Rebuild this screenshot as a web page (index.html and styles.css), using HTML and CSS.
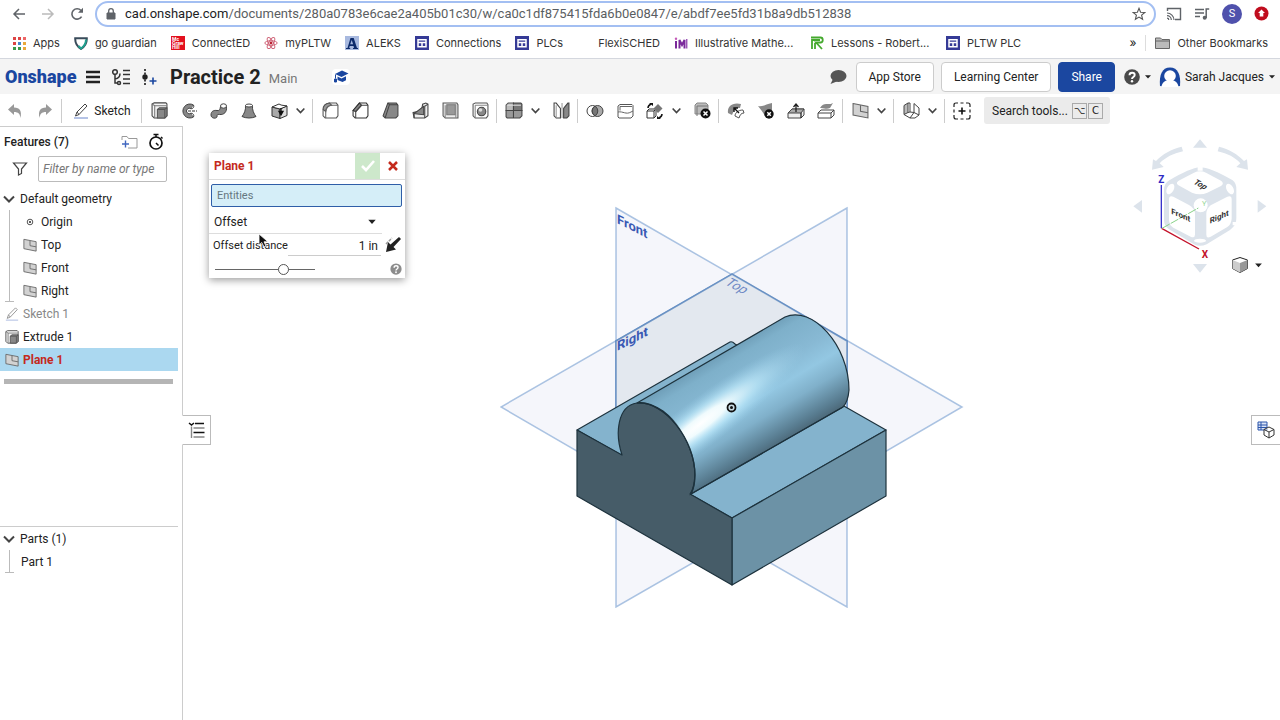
FILE: index.html
```html
<!DOCTYPE html>
<html lang="en">
<head>
<meta charset="utf-8">
<title>Practice 2 | Part Studio</title>
<link rel="stylesheet" href="styles.css">
</head>
<body>
<svg class="defs" aria-hidden="true">
  <symbol id="chevron" viewBox="0 0 10 10"><path d="M1.5 3.2 5 6.8 8.5 3.2" fill="none" stroke="#444" stroke-width="1.5"/></symbol>
  <symbol id="caret" viewBox="0 0 8 8"><path d="M1 2.2h6L4 5.6z" fill="#222"/></symbol>
  <symbol id="plane" viewBox="0 0 16 16"><path d="M1 1.5 15 4.2V15L1 12.2z" fill="#d2d2d2" stroke="#666"/><path d="M8 3v5.800l7 1.300" fill="none" stroke="#666"/></symbol>
  <symbol id="extrude" viewBox="0 0 16 16"><path d="M1 1.800 3 .800h11l1 1V13l-2 2H3l-2-2z" fill="#f6f6f6" stroke="#444"/><path d="M3.500 3.500h11M3.500 3.500V14.500M1 1.800l2.500 1.700" fill="none" stroke="#777"/><path d="M6 7l2-1.500h7V13l-2 2H6z" fill="#888" stroke="#555"/><path d="M6 7h7v8M13 7l2-1.500" fill="none" stroke="#555"/></symbol>
  <symbol id="pencil" viewBox="0 0 16 16"><path d="M2.500 13 4 9 12 1l2 2-8 8.500z" fill="#fff" stroke="#444"/><path d="M4 9l2 2.500" stroke="#444"/><path d="M1 15h14" stroke="#6a86cc"/></symbol>
  <symbol id="site" viewBox="0 0 14 14"><path d="M0 0h14v14H0z" fill="#353a96"/><path d="M3 3.800h8v7H3zM3 6.600h8M7 6.600v4" fill="none" stroke="#fff" stroke-width="1.500"/></symbol>
</svg>

<div class="browser">
  <div class="address-row">
    <button class="nav" aria-label="Back"><svg width="14" height="14" viewBox="0 0 14 14"><path d="M13 7H2M7 2 2 7l5 5" fill="none" stroke="#5f6368" stroke-width="1.500"/></svg></button>
    <button class="nav" aria-label="Forward"><svg width="14" height="14" viewBox="0 0 14 14"><path d="M1 7h11M7 2l5 5-5 5" fill="none" stroke="#bbb" stroke-width="1.500"/></svg></button>
    <button class="nav" aria-label="Reload"><svg width="14" height="14" viewBox="0 0 14 14"><path d="M11.600 9.600A5.200 5.200 0 1 1 11 3.500" fill="none" stroke="#5f6368" stroke-width="1.600"/><path d="M13 .800v5H8z" fill="#5f6368"/></svg></button>
    <div class="omnibox">
      <svg width="10" height="12" viewBox="0 0 10 12"><path d="M1 5h8v6H1z" fill="#5f6368" stroke="#5f6368"/><path d="M2.700 5V3a2.300 2.300 0 0 1 4.600 0v2" fill="none" stroke="#5f6368" stroke-width="1.300"/></svg>
      <span class="url"><b>cad.onshape.com</b>/documents/280a0783e6cae2a405b01c30/w/ca0c1df875415fda6b0e0847/e/abdf7ee5fd31b8a9db512838</span>
      <svg width="14" height="14" viewBox="0 0 14 14"><path d="m7 1.300 1.600 3.900 4.200.300-3.200 2.700 1 4.100L7 10.100l-3.600 2.200 1-4.100L1.200 5.500l4.200-.300z" fill="none" stroke="#555" stroke-width="1.100"/></svg>
    </div>
    <div class="extensions">
      <svg width="16" height="14" viewBox="0 0 16 14"><path d="M1.500 4V1.500h13v11H9" fill="none" stroke="#5f6368" stroke-width="1.400"/><path d="M1 6a7 7 0 0 1 7 7M1 8.700A4.300 4.300 0 0 1 5.300 13M1 11.200A1.800 1.800 0 0 1 2.800 13" fill="none" stroke="#5f6368" stroke-width="1.200"/></svg>
      <svg width="16" height="14" viewBox="0 0 16 14"><path d="M1 2.500h9M1 6h9M1 9.500h5M12.200 11V2h3" fill="none" stroke="#5f6368" stroke-width="1.500"/><circle cx="10.700" cy="10.800" r="2" fill="#5f6368"/></svg>
      <span class="profile">S</span>
      <svg width="15" height="15" viewBox="0 0 15 15"><circle cx="7.500" cy="7.500" r="7" fill="#c00d1e"/><path d="M7.500 3.500 11 7H9.300v3.500H5.700V7H4z" fill="#fff"/></svg>
    </div>
  </div>
  <nav class="bookmarks">
    <a href="#"><svg width="14" height="14" viewBox="0 0 14 14"><path d="M1 1h3v3H1zM1 6h3v3H1z" fill="#d44"/><path d="M6 1h3v3H6z" fill="#d44"/><path d="M11 1h3v3h-3z" fill="#e66"/><path d="M6 6h3v3H6z" fill="#48c"/><path d="M11 6h3v3h-3z" fill="#e9a83a"/><path d="M1 11h3v3H1z" fill="#3a9a4a"/><path d="M6 11h3v3H6z" fill="#3a9a4a"/><path d="M11 11h3v3h-3z" fill="#e9a83a"/></svg>Apps</a>
    <a href="#"><svg width="14" height="14" viewBox="0 0 14 14"><path d="M1.200 2.200h11.600C13 7 11 10.500 7 13 3 10.500 1 7 1.200 2.200z" fill="none" stroke="#394b5a" stroke-width="2"/><path d="M12 3.500C12 7.500 10.500 10 7 12.500L4.500 10" fill="none" stroke="#20a08e" stroke-width="2"/></svg>go guardian</a>
    <a href="#"><svg class="mcgraw" width="14" height="14" viewBox="0 0 14 14"><path d="M0 0h14v14H0z" fill="#e3101e"/><text x="1" y="5">Mc</text><text x="1" y="9">Graw</text><text x="1" y="13">Hill</text></svg>ConnectED</a>
    <a href="#"><svg width="14" height="14" viewBox="0 0 14 14"><g fill="none" stroke="#cf6478"><ellipse cx="7" cy="7" rx="6.200" ry="2.300"/><ellipse cx="7" cy="7" rx="6.200" ry="2.300" transform="rotate(60 7 7)"/><ellipse cx="7" cy="7" rx="6.200" ry="2.300" transform="rotate(120 7 7)"/></g><circle cx="7" cy="7" r="1.400" fill="#b23"/></svg>myPLTW</a>
    <a href="#"><svg width="14" height="14" viewBox="0 0 14 14"><path d="M0 0h14v14H0z" fill="#a8b9df"/><path d="M1 12h1.500L5.500 2h3.200L12 12h1v1H8v-1h1L8.500 10H4.700L4.200 12h1v1H1zM5.200 8.200h2.900L6.700 4z" fill="#0d2b6b" fill-rule="evenodd"/></svg>ALEKS</a>
    <a href="#"><svg width="14" height="14"><use href="#site"/></svg>Connections</a>
    <a href="#"><svg width="14" height="14"><use href="#site"/></svg>PLCs</a>
    <a href="#"><svg width="14" height="14"></svg>FlexiSCHED</a>
    <a class="long" href="#"><svg width="14" height="14" viewBox="0 0 14 14"><path d="M2 5v7.500M5.500 12.500V4L8 9l2.500-5v8.500" fill="none" stroke="#7b2a9b" stroke-width="2"/><circle cx="2" cy="2.800" r="1.200" fill="#c45ab8"/><path d="M12.700 3v9.500" stroke="#9c55b5" stroke-width="1.500"/></svg>Illustrative Mathe...</a>
    <a class="long" href="#"><svg width="14" height="14" viewBox="0 0 14 14"><path d="M2 13V4h3M1 1.500h9.500c3 0 3 5 0 5H6l6 6.500M5 4h5M5 13V7" fill="none" stroke="#45a92e" stroke-width="1.800"/></svg>Lessons - Robert...</a>
    <a href="#"><svg width="14" height="14"><use href="#site"/></svg>PLTW PLC</a>
    <span class="more">»</span>
    <a class="other" href="#"><svg width="15" height="12" viewBox="0 0 15 12"><path d="M.500 1h5l1.500 1.500h7.500v9H.500z" fill="#bbb" stroke="#666"/><path d="M.500 4h14" stroke="#666"/></svg>Other Bookmarks</a>
  </nav>
</div>

<header class="doc-bar">
  <span class="logo">Onshape</span>
  <button class="plain" aria-label="Menu"><svg width="16" height="16" viewBox="0 0 16 16"><path d="M1 3h14M1 8h14M1 13h14" stroke="#222" stroke-width="2.400"/></svg></button>
  <button class="plain" aria-label="Versions"><svg width="20" height="18" viewBox="0 0 20 18"><g fill="none" stroke="#333" stroke-width="1.500"><circle cx="4" cy="4" r="2.300"/><path d="M4 6.500v8.500h2.500M4 11C8 10.500 9 8 9 5.500"/><circle cx="8" cy="15" r="1.500"/><path d="M12 2.500h7M12 6.500h7M12 11h7M12 15.500h7"/></g></svg></button>
  <button class="plain" aria-label="Create version"><svg width="16" height="18" viewBox="0 0 16 18"><path d="M4 1v16" stroke="#333" stroke-width="1.800" stroke-dasharray="2 1.500"/><circle cx="4" cy="9" r="2.700" fill="#222"/><path d="M12 9.500v7M8.500 13h7" stroke="#1b47a0" stroke-width="1.600"/></svg></button>
  <h1>Practice 2</h1>
  <span class="workspace">Main</span>
  <span class="edu"><svg width="16" height="14" viewBox="0 0 16 14"><path d="M9 .500 15.500 3.500 8.500 7 2 4z" fill="#1b47a0"/><path d="M4.500 6.500 8.500 8.500l4.500-2.200v4L9.500 12 4.500 10z" fill="#1b47a0"/><path d="M2.500 4.500v4M1.500 9h2v3h-2z" fill="#1b47a0" stroke="#1b47a0"/></svg></span>
  <div class="account">
    <svg width="18" height="16" viewBox="0 0 18 16"><ellipse cx="9.500" cy="7" rx="8" ry="6" fill="#555"/><path d="M4 10l-2.500 5L9 12z" fill="#555"/></svg>
    <button class="btn">App Store</button>
    <button class="btn">Learning Center</button>
    <button class="btn share">Share</button>
    <button class="plain help" aria-label="Help"><svg width="16" height="16" viewBox="0 0 16 16"><circle cx="8" cy="8" r="7.800" fill="#4a4a4a"/><path d="M5.500 6.200c0-3.400 5.200-3.200 5.200-.200C10.700 8 8 8 8 10" fill="none" stroke="#fff" stroke-width="1.900"/><circle cx="8" cy="12.300" r="1.200" fill="#fff"/></svg><svg width="8" height="8"><use href="#caret"/></svg></button>
    <button class="plain user"><svg width="22" height="20" viewBox="0 0 22 20"><path d="M1 19C0 8 3 .500 11 .500S22 8 21 19l-4 .500H5z" fill="#1b47a0"/><circle cx="11" cy="9" r="5.800" fill="#fff"/><path d="M2.500 20c.500-5 4-6 6-7h5c2 1 5.500 2 6 7z" fill="#fff"/></svg>Sarah Jacques<svg width="8" height="8"><use href="#caret"/></svg></button>
  </div>
</header>

<div class="toolbar">
  <button aria-label="Undo"><svg width="16" height="16" viewBox="0 0 16 16"><path d="M1 6.500 7 1v3.500c6 0 8 4 6.500 10.500C13 11 11.500 9 7 9v3z" fill="#999"/></svg></button>
  <button aria-label="Redo"><svg width="16" height="16" viewBox="0 0 16 16"><path d="M15 6.500 9 1v3.500C3 4.500 1 8.500 2.500 15 3 11 4.500 9 9 9v3z" fill="#999"/></svg></button>
  <i></i>
  <button class="sketch"><svg width="16" height="16"><use href="#pencil"/></svg>Sketch</button>
  <i></i>
  <button aria-label="Extrude"><svg width="17" height="17"><use href="#extrude"/></svg></button>
  <button aria-label="Revolve"><svg width="16" height="16" viewBox="0 0 16 16"><path d="M12.500 2A7 7 0 1 0 12.500 14L10 10.200a2.800 2.800 0 1 1 0-4.400z" fill="#888" stroke="#444"/><path d="M10 5.800a2.600 2.600 0 0 0 2.500-3.800M10 10.200a2.600 2.600 0 0 1 2.500 3.800" fill="#eee" stroke="#444"/><path d="M7 8h9" stroke="#333" stroke-dasharray="3 1"/></svg></button>
  <button aria-label="Sweep"><svg width="18" height="16" viewBox="0 0 18 16"><path d="M1 12c0-4 3-5 6-4.500C10 8 10 6 10.500 3.500l6 .500C17 9 14 12 9.500 11.500 7 11 7 12 7 14c-1 2-6 1.500-6-2z" fill="#888" stroke="#444"/><ellipse cx="13.500" cy="3" rx="3" ry="2.200" fill="#fff" stroke="#444"/></svg></button>
  <button aria-label="Loft"><svg width="16" height="16" viewBox="0 0 16 16"><path d="M4.500 2.500C5 7 3 11 1 13.500c4 2 10 2 14 0C13 11 11 7 11.500 2.500z" fill="#888" stroke="#444"/><ellipse cx="8" cy="2.500" rx="3.500" ry="1.500" fill="#fff" stroke="#444"/></svg></button>
  <button aria-label="Thicken"><svg width="17" height="16" viewBox="0 0 17 16"><path d="M1 4v9l8 2.500V6z" fill="#aaa" stroke="#333"/><path d="M9 6v9.500l7-3V3z" fill="#ddd" stroke="#333"/><path d="M1 4l7-3c3 2 5 1 8 2L9 6z" fill="#fff" stroke="#333"/><path d="M10 5v5M8 8.500l2 3.500 2-3.500z" stroke="#111" stroke-width="1.300"/></svg></button>
  <button class="drop" aria-label="More create tools"><svg width="11" height="11"><use href="#chevron"/></svg></button>
  <i></i>
  <button aria-label="Fillet"><svg width="17" height="17" viewBox="0 0 16 16"><path d="M1 8q0-6 6-7h6.500L15 3v10l-1.500 2H3l-2-2z" fill="#fff" stroke="#555"/><path d="M1 7q0-5 6-6l2 2Q4 3.500 3.500 9z" fill="#999" stroke="#555"/><path d="M3.500 15V9Q4 3.500 9 3h6" fill="none" stroke="#666"/></svg></button>
  <button aria-label="Chamfer"><svg width="17" height="17" viewBox="0 0 16 16"><path d="M1 8 7 1h6.500L15 3v10l-1.500 2H3l-2-2z" fill="#fff" stroke="#333"/><path d="M1 8 7 1l2 2-5.500 6z" fill="#888" stroke="#333"/><path d="M3.500 15V9L9 3h6" fill="none" stroke="#444"/></svg></button>
  <button aria-label="Draft"><svg width="17" height="17" viewBox="0 0 16 16"><path d="M1 13 5.500 1h8l1.500 2v10l-2 2H3z" fill="#888" stroke="#444"/><path d="M3 15 7 2.500h8M5.500 1 7 2.500" fill="none" stroke="#444"/></svg></button>
  <button aria-label="Rib"><svg width="17" height="17" viewBox="0 0 16 16"><path d="M1 10l8-2 1-6 3-1 2 1v11l-3 2H2z" fill="#eee" stroke="#444"/><path d="M2 11 11 4v8z" fill="#888" stroke="#444"/><path d="M2 15v-4M12 15V4l3-2" fill="none" stroke="#444"/></svg></button>
  <button aria-label="Shell"><svg width="17" height="17" viewBox="0 0 16 16"><path d="M1 1h13l1 1.500V15H3l-2-2z" fill="#eee" stroke="#555"/><path d="M4.500 2.500h8V12h-8z" fill="#999" stroke="#777"/><path d="M3 3v12M13 2v13" stroke="#888"/></svg></button>
  <button aria-label="Hole"><svg width="17" height="17" viewBox="0 0 16 16"><path d="M1 2 3 1h11l1 1.500V13l-1.500 2H3l-2-2z" fill="#fff" stroke="#555"/><path d="M3 3h12M3 3v12" stroke="#888"/><circle cx="9" cy="9" r="4" fill="#888" stroke="#444"/><circle cx="8" cy="7.500" r="1.700" fill="#ddd"/></svg></button>
  <i></i>
  <button aria-label="Pattern"><svg width="18" height="17" viewBox="0 0 17 16"><path d="M1 3l2-2h5v7H1z" fill="#bbb" stroke="#555"/><path d="M1 8h7v7H2l-1-1zM8 8h8v5l-2 2H8z" fill="#999" stroke="#444"/><path d="M8 1h7l1 1v6H8z" fill="#777" stroke="#444"/><path d="M2 3h13" stroke="#ddd"/></svg></button>
  <button class="drop" aria-label="More patterns"><svg width="11" height="11"><use href="#chevron"/></svg></button>
  <button aria-label="Mirror"><svg width="17" height="17" viewBox="0 0 16 16"><path d="M1 1h2l4 5v9H3l-2-2z" fill="#fff" stroke="#444"/><path d="M10 6l4-5h1v12l-2 2h-3z" fill="#888" stroke="#444"/><path d="M3 3v12M8.500 1v14" stroke="#999"/></svg></button>
  <i></i>
  <button aria-label="Boolean"><svg width="18" height="16" viewBox="0 0 18 16"><circle cx="6.500" cy="8" r="5.500" fill="#fff" stroke="#444"/><circle cx="11.500" cy="8" r="5.500" fill="#aaa" stroke="#444"/><path d="M9 3.200a5.500 5.500 0 0 1 0 9.600 5.500 5.500 0 0 1 0-9.600z" fill="#777" stroke="#444"/></svg></button>
  <button aria-label="Split"><svg width="17" height="16" viewBox="0 0 17 16"><path d="M1 3l2-1.500h12l1 1V13l-2 2H2l-1-1z" fill="#fff" stroke="#555"/><path d="M3 3.500h12M1 9c5-1 8 3 13 0l2-1M3 3.500v4" fill="none" stroke="#666"/></svg></button>
  <button aria-label="Transform"><svg width="18" height="18" viewBox="0 0 18 18"><path d="M1 9l2-2h7v7l-2 2H1z" fill="#fff" stroke="#333"/><path d="M1 9h7v7M8 9l2-2" fill="none" stroke="#333"/><path d="M12 2l4.500 4.500L12 11 7.500 6.500z" fill="#777"/><path d="M2 6c0-2 1-3 3-4M16 12c0 2-1 3-3 4" fill="none" stroke="#111" stroke-width="1.500"/><path d="M3 1h4v3zM15 17h-4v-3z" fill="#111"/></svg></button>
  <button class="drop" aria-label="More transforms"><svg width="11" height="11"><use href="#chevron"/></svg></button>
  <button aria-label="Delete part"><svg width="17" height="17" viewBox="0 0 17 17"><path d="M1 3l2-2h9l2 2v9H1z" fill="#bbb" stroke="#888"/><path d="M3 14V4h11" fill="none" stroke="#777"/><circle cx="11.500" cy="11.500" r="5" fill="#111"/><path d="M9.500 9.500l4 4M13.500 9.500l-4 4" stroke="#fff" stroke-width="1.500"/></svg></button>
  <i></i>
  <button aria-label="Modify fillet"><svg width="18" height="17" viewBox="0 0 18 17"><path d="M1 11C0 4 6 0 14 2l-1 4H8L5 13z" fill="#888"/><path d="M8 14c0-3 3-6 8-6l1 3c-3 0-4 2-5 5z" fill="#fff" stroke="#555"/><path d="M12 11 7.500 6.500M7 10V6h4" fill="none" stroke="#111" stroke-width="1.400"/></svg></button>
  <button aria-label="Delete face"><svg width="18" height="17" viewBox="0 0 18 17"><path d="M1 4c5 1 8-2 14-3v9l-7 4C6 10 4 8 1 4z" fill="#888"/><circle cx="12" cy="12" r="4.700" fill="#111"/><path d="M10.300 10.300l3.500 3.500M13.800 10.300l-3.500 3.500" stroke="#fff" stroke-width="1.500"/></svg></button>
  <button aria-label="Move face"><svg width="18" height="17" viewBox="0 0 18 17"><path d="M1 11l4-4h12v6l-3 3H1z" fill="#eee" stroke="#444"/><path d="M1 11l4-4h12l-3 4z" fill="#aaa" stroke="#444"/><path d="M14 11v5M9 10V3M6.500 5 9 2l2.500 3" fill="none" stroke="#222" stroke-width="1.300"/></svg></button>
  <button aria-label="Replace face"><svg width="18" height="17" viewBox="0 0 18 17"><path d="M3 6c4-7 8-2 13-5l-3 5c-4 2-6-.500-10 0z" fill="#888"/><path d="M1 11l3-3h13v5l-3 3H1z" fill="#fff" stroke="#444"/><path d="M1 11h13v5M14 11l3-3" fill="none" stroke="#444"/></svg></button>
  <i></i>
  <button aria-label="Plane"><svg width="17" height="17"><use href="#plane"/></svg></button>
  <button class="drop" aria-label="More planes"><svg width="11" height="11"><use href="#chevron"/></svg></button>
  <i></i>
  <button aria-label="Frame"><svg width="17" height="17" viewBox="0 0 17 17"><path d="M1 3.500 5 1v9.500l-4 2z" fill="#bbb" stroke="#444"/><path d="M1 12.500 7 16h5l4-3V6l-5-4.500v9L7 16M5 1h2v9l-2 .500M7 10l4 .500 5 2.500" fill="none" stroke="#444"/></svg></button>
  <button class="drop" aria-label="More frames"><svg width="11" height="11"><use href="#chevron"/></svg></button>
  <i></i>
  <button aria-label="Add custom features"><svg width="18" height="18" viewBox="0 0 18 18"><path d="M1 5V3q0-2 2-2h2M13 1h2q2 0 2 2v2M17 13v2q0 2-2 2h-2M5 17H3q-2 0-2-2v-2M7.500 1h3M7.500 17h3M1 7.500v3M17 7.500v3" fill="none" stroke="#222" stroke-width="1.200"/><path d="M9 5.500v7M5.500 9h7" stroke="#111" stroke-width="1.600"/></svg></button>
  <button class="search">Search tools...<kbd>⌥</kbd><kbd>C</kbd></button>
</div>

<main class="workspace-area">
  <aside class="sidebar">
    <section class="features">
      <div class="panel-head">
        <h2>Features (7)</h2>
        <svg width="17" height="14" viewBox="0 0 17 14"><path d="M1 5V1.500h5l1.500 2H16v9.500H7" fill="none" stroke="#999"/><path d="M4.500 5.500v7M1 9h7" stroke="#4067c0" stroke-width="1.400"/></svg>
        <svg width="16" height="18" viewBox="0 0 16 18"><circle cx="8" cy="10" r="6" fill="none" stroke="#111" stroke-width="1.700"/><path d="M5.500 1.500h5M8 1.500V4M13 4l1.500 1.500M8 10l2.500 2.500" fill="none" stroke="#111" stroke-width="1.500"/></svg>
      </div>
      <div class="filter">
        <svg width="16" height="16" viewBox="0 0 16 16"><path d="M1.500 2h13L9.500 8v4.500L6.500 14V8z" fill="none" stroke="#444" stroke-width="1.200"/></svg>
        <input type="text" aria-label="Filter features" placeholder="Filter by name or type">
      </div>
      <div class="row group"><svg width="14" height="14" viewBox="0 0 14 14"><path d="M2 4.500 7 9.500l5-5" fill="none" stroke="#444" stroke-width="2"/></svg>Default geometry</div>
      <ul class="children geometry">
        <li class="row"><svg width="14" height="14" viewBox="0 0 14 14"><circle cx="7" cy="7" r="2.800" fill="none" stroke="#555"/><circle cx="7" cy="7" r="1.100" fill="#333"/></svg>Origin</li>
        <li class="row"><svg width="14" height="14"><use href="#plane"/></svg>Top</li>
        <li class="row"><svg width="14" height="14"><use href="#plane"/></svg>Front</li>
        <li class="row"><svg width="14" height="14"><use href="#plane"/></svg>Right</li>
      </ul>
      <div class="row muted"><svg width="14" height="14"><use href="#pencil"/></svg>Sketch 1</div>
      <div class="row"><svg width="14" height="14"><use href="#extrude"/></svg>Extrude 1</div>
      <div class="row selected"><svg width="14" height="14"><use href="#plane"/></svg>Plane 1</div>
      <div class="rollback"></div>
    </section>
    <section class="parts">
      <div class="row group"><svg width="14" height="14" viewBox="0 0 14 14"><path d="M2 4.500 7 9.500l5-5" fill="none" stroke="#444" stroke-width="2"/></svg>Parts (1)</div>
      <ul class="children"><li class="row">Part 1</li></ul>
    </section>
  </aside>

  <section class="viewport">
    <svg class="model" width="464" height="402" viewBox="500 206 464 402" role="img" aria-label="Part 1 in isometric view">
      <defs>
        <linearGradient id="barrel" gradientUnits="userSpaceOnUse" x1="710" y1="357" x2="770" y2="457">
          <stop offset="0" stop-color="#6c9bb5"/><stop offset=".12" stop-color="#7eb0ca"/><stop offset=".35" stop-color="#88b9d4"/><stop offset=".52" stop-color="#93c7e2"/><stop offset=".68" stop-color="#80b0ca"/><stop offset=".88" stop-color="#587c90"/><stop offset="1" stop-color="#445b69"/>
        </linearGradient>
        <radialGradient id="shine" gradientUnits="userSpaceOnUse" cx="0" cy="0" r="1" gradientTransform="translate(700 424) rotate(-37) scale(130 24)">
          <stop offset="0" stop-color="#fff"/><stop offset=".25" stop-color="#f5feff" stop-opacity=".95"/><stop offset=".55" stop-color="#c5efff" stop-opacity=".6"/><stop offset="1" stop-color="#9bd1ec" stop-opacity="0"/>
        </radialGradient>
        <clipPath id="barrel-shape"><path d="M637 403 785 317C812 305 849 345 849 390Q848 402 843 407L691 494C701 470 690 432 663 411Q647 401 637 403z"/></clipPath>
      </defs>
      <g fill="#6b83c0" fill-opacity=".07" stroke="#5b8cc8" stroke-opacity=".5" stroke-width="1.500">
        <path d="M616 208 847 341V607L616 474z"/>
        <path d="M847 208 616 341V607l231-133z"/>
        <path d="M732 274 962 407 732 541 501 407z"/>
      </g>
      <path d="M616 341 732 274 847 341v133H616z" fill="#e4e9ed" fill-opacity=".8"/>
      <path d="M616 440V341l116-67 115 67v70" fill="none" stroke="#5583bb" stroke-opacity=".75" stroke-width="1.500"/>
      <g class="plane-label">
        <text transform="translate(617 223) skewY(27)">Front</text>
        <text transform="translate(617 351) skewY(-27)">Right</text>
        <text class="faint" transform="translate(724 284) rotate(28) skewX(-22)">Top</text>
      </g>
      <g stroke="#1d323d" stroke-width="1.200" stroke-linejoin="round">
        <path d="M577 430 730 342Q732 341 735 344L886 430 732 518z" fill="#84b3cd"/>
        <path d="M732 518 886 430v66L732 585z" fill="#6c92a6"/>
        <path d="M577 430 622 455C615 434 617 406 637 403 665 401 695 440 695 475Q695 487 690 494L732 518v67L577 496z" fill="#465c68"/>
        <path d="M637 403 785 317C812 305 849 345 849 390Q848 402 843 407L691 494C701 470 690 432 663 411Q647 401 637 403z" fill="url(#barrel)"/>
      </g>
      <path clip-path="url(#barrel-shape)" d="M600 300h260v210H600z" fill="url(#shine)"/>
      <path d="M637 403C665 401 695 440 695 475Q695 487 691 494L843 407" fill="none" stroke="#1d323d" stroke-width="1.200"/>
      <circle cx="731.500" cy="407.500" r="4" fill="#c9dbe3" stroke="#111" stroke-width="1.800"/><circle cx="731.500" cy="407.500" r="1.500" fill="#111"/>
    </svg>

    <form class="dialog">
      <div class="dialog-head">
        <h2>Plane 1</h2>
        <button type="button" class="accept" aria-label="Accept"><svg width="16" height="14" viewBox="0 0 16 14"><path d="M2 7l4 4 8-9" fill="none" stroke="#fff" stroke-width="2.600"/></svg></button>
        <button type="button" class="cancel" aria-label="Cancel"><svg width="12" height="12" viewBox="0 0 12 12"><path d="M2 2l8 8M10 2l-8 8" stroke="#c42a1c" stroke-width="2.500"/></svg></button>
      </div>
      <input class="entities" type="text" aria-label="Entities" placeholder="Entities">
      <div class="type">
        <select aria-label="Plane type"><option>Offset</option></select>
        <svg width="10" height="10"><use href="#caret"/></svg>
      </div>
      <div class="distance">
        <label for="dist">Offset distance</label>
        <input id="dist" type="text" value="1 in">
        <button type="button" aria-label="Opposite direction"><svg width="18" height="18" viewBox="0 0 18 18"><path d="M2 16 4 6l2.500 2.500L15 1l2 2-7.500 8L12 13.500z" fill="#222"/><path d="M2 8 8 2" stroke="#999" stroke-width="1.500" stroke-dasharray="3 1"/></svg></button>
      </div>
      <div class="slide">
        <input type="range" aria-label="Preview opacity" min="0" max="100" value="71">
        <svg width="12" height="12" viewBox="0 0 16 16"><circle cx="8" cy="8" r="7.500" fill="#8c8c8c"/><path d="M5.500 6.200c0-3.400 5.200-3.200 5.200-.200C10.700 8 8 8 8 10" fill="none" stroke="#fff" stroke-width="1.900"/><circle cx="8" cy="12.300" r="1.200" fill="#fff"/></svg>
      </div>
    </form>
    <svg class="pointer" width="11" height="15" viewBox="0 0 11 15"><path d="M1 1v11l2.800-2.500L6 14l2-1-2-4.200h4z" fill="#111" stroke="#fff" stroke-width=".8"/></svg>

    <button class="tab left" aria-label="Feature list"><svg width="18" height="18" viewBox="0 0 18 18"><path d="M1 2l2.500 2L6 2" fill="none" stroke="#111" stroke-width="1.500"/><path d="M7 2.500h9M5.500 11.500h11" stroke="#111" stroke-width="1.400"/><path d="M5.500 7h11M5.500 16h11M3.500 5.500V17" stroke="#888" stroke-width="1.400"/></svg></button>
    <button class="tab right" aria-label="Configurations"><svg width="18" height="18" viewBox="0 0 18 18"><path d="M1 1h9v8H1zM1 4h9M1 6.500h9M4 1v8" fill="#dbe4f7" stroke="#2a55ab"/><path d="M12 6l5 2.500V14l-5 3-5-3V8.500zM7 8.500l5 2.500 5-2.500M12 11v6" fill="#fff" stroke="#333"/></svg></button>

    <svg class="view-cube" width="160" height="150" viewBox="0 0 480 450" role="img" aria-label="View cube">
      <g fill="#dce3eb">
        <path d="M219 53h42l-21-25zM219 402h42l-21 26zM66 210v38l-26-19zM413 210v38l26-19z"/>
        <path d="M185 50l4 14c-30 7-52 18-70 36l12 11-35 8 3-31 9 5c20-21 46-36 77-43zM297 50l-4 14c30 7 52 18 68 36l-12 11 35 8-3-31-9 5c-20-21-45-36-75-43z"/>
        <path d="M240 112Q270 112 338 151 350 160 349 180V265Q350 285 330 300L260 343Q240 352 222 343L147 298Q132 287 132 270V180Q132 160 148 151 210 114 240 112z"/>
      </g>
      <g fill="#fff">
        <path d="M174 165Q165 157 180 150L222 128Q240 120 258 128L303 152Q314 160 303 168L262 188Q240 198 216 188zM147 208Q147 195 160 200L207 225Q224 235 225 250V314Q224 326 212 320L160 293Q148 286 147 270zM259 250Q260 235 272 226L322 200Q335 195 335 208V266Q334 282 322 291L272 320Q259 327 259 314z"/>
        <circle cx="242" cy="226" r="21"/><ellipse cx="151" cy="177" rx="10" ry="17" transform="rotate(30 151 177)"/><ellipse cx="330" cy="177" rx="10" ry="17" transform="rotate(-30 330 177)"/><ellipse cx="240" cy="332" rx="18" ry="6"/>
        <path d="M233 108h15v14h-15zM338 276h18v10h-18z"/>
      </g>
      <path d="M124 295V165" stroke="#3933cc" stroke-width="4"/><path d="M125 295 237 357" stroke="#c4122a" stroke-width="4"/><path d="M126 295 235 234" stroke="#88d288" stroke-width="3" stroke-dasharray="26 4"/>
      <g class="face-label">
        <text transform="translate(154 251) skewY(24)">Front</text>
        <text transform="translate(269 281) skewY(-24)">Right</text>
        <text transform="translate(218 160) rotate(28) skewX(-20)">Top</text>
      </g>
      <g class="axis"><text x="115" y="158" fill="#2f2bc4">Z</text><text x="245" y="383" fill="#c4122a">X</text><text class="y" x="246" y="229" fill="#98d898">Y</text></g>
    </svg>
    <button class="display-mode" aria-label="Display mode"><svg width="18" height="18" viewBox="0 0 18 18"><path d="M9 1.500 16.500 4v8.500L9 16.500l-7.500-4V4z" fill="#fff" stroke="#222"/><path d="M1.500 4 9 7v9.500l-7.500-4z" fill="#ccc"/><path d="M9 7l7.500-3v8.500L9 16.500z" fill="#999"/></svg><svg width="9" height="9"><use href="#caret"/></svg></button>
  </section>
</main>
</body>
</html>
```
FILE: styles.css
```css
* { box-sizing: border-box; }
body {
  margin: 0;
  height: 100vh;
  display: flex;
  flex-direction: column;
  overflow: hidden;
  background: #fff;
  color: #222;
  font: 12px/20px Roboto, "Liberation Sans", sans-serif;
}
.defs { position: absolute; width: 0; height: 0; }
button { font: inherit; color: inherit; background: none; border: 0; padding: 0; cursor: pointer; }
svg { flex: none; display: block; }
h1, h2, ul { margin: 0; padding: 0; }
ul { list-style: none; }

/* browser chrome */
.browser { border-bottom: 1px solid #d4d7de; }
.address-row { display: flex; align-items: center; height: 27px; padding: 0 11px 0 0; }
.nav { width: 28px; display: flex; justify-content: center; margin-left: 1px; }
.nav:first-child { margin-left: 5px; }
.nav:nth-child(3) { margin-right: 4px; }
.omnibox {
  flex: 1;
  display: flex;
  align-items: center;
  gap: 9px;
  height: 26px;
  padding: 0 8px 0 9px;
  border: 2px solid #a3bff2;
  border-radius: 13px;
}
.url { flex: 1; color: #5a5e62; font-size: 13px; white-space: nowrap; }
.url b { font-weight: 400; color: #1d1d1f; }
.extensions { display: flex; align-items: center; gap: 12px; padding-left: 10px; }
.profile { width: 20px; height: 20px; border-radius: 10px; background: #4f51ac; color: #fff; text-align: center; font-size: 11px; }
.bookmarks { display: flex; align-items: center; gap: 14px; height: 31px; padding: 0 12px; font: 11px/16px Inter, sans-serif; white-space: nowrap; }
.bookmarks a { display: flex; align-items: center; gap: 7px; color: #333; text-decoration: none; }
.bookmarks .long { width: 122px; }
.mcgraw text { font: bold 5px Roboto, sans-serif; fill: #fff; }
.more { margin-left: auto; margin-right: -5px; font-size: 12px; }
.bookmarks .other { border-left: 1px solid #ddd; padding-left: 9px; }

/* document bar */
.doc-bar { display: flex; align-items: center; height: 35px; padding: 0 4px 0 5px; background: #f4f4f4; white-space: nowrap; }
.logo { width: 80px; font: 900 18px/24px Roboto, sans-serif; color: #1b47a0; }
.doc-bar > .plain { margin-right: 10px; }
.doc-bar h1 { margin-left: 3px; font: bold 20px/26px Roboto, sans-serif; }
.workspace { margin-left: 8px; padding-top: 4px; color: #777; font-size: 13px; }
.edu { margin-left: 34px; padding: 1px; background: #fff; border-radius: 4px; }
.account { display: flex; align-items: center; gap: 7px; margin-left: auto; }
.account > svg { margin-right: 2px; }
.btn { height: 30px; padding: 0 12px; border: 1px solid #ccc; border-radius: 4px; background: #fff; }
.share { background: #1b47a0; border-color: #1b47a0; color: #fff; }
.plain { display: flex; align-items: center; gap: 4px; }
.help { margin-left: 2px; }

/* tools */
.toolbar { display: flex; align-items: center; height: 32px; padding-top: 1px; }
.toolbar button { flex: none; width: 30px; height: 27px; display: flex; align-items: center; justify-content: center; }
.toolbar i { flex: none; width: 4px; height: 24px; border-right: 2px solid #fff; border-left: 1px solid #fff; background: #ccc; }
.toolbar .drop { width: 17px; justify-content: flex-start; padding-left: 1px; }
.toolbar .sketch { width: 76px; gap: 5px; }
.toolbar .search { width: auto; margin-left: 7px; padding: 0 7px 0 8px; background: #ebebeb; border-radius: 3px; white-space: nowrap; }
kbd { width: 15px; height: 16px; border: 1px solid #aaa; font: 10px/14px "DejaVu Sans", sans-serif; text-align: center; }
.search kbd:first-of-type { margin-left: 4px; margin-right: 1px; }

/* feature panel */
.workspace-area { flex: 1; display: flex; min-height: 0; }
.sidebar { flex: none; width: 183px; display: flex; flex-direction: column; border-top: 1px solid #ccc; border-right: 1px solid #ccc; padding-right: 4px; }
.features { flex: 1; }
.parts { flex: 0 0 194px; border-top: 1px solid #ccc; }
.panel-head { display: flex; align-items: center; height: 29px; padding: 0 14px 0 4px; gap: 10px; }
.panel-head h2 { flex: 1; font: 500 12px/18px Roboto, sans-serif; }
.filter { display: flex; align-items: center; gap: 10px; padding: 0 11px 5px 12px; }
.filter input { flex: 1; min-width: 0; height: 26px; border: 1px solid #bbb; border-radius: 2px; padding: 0 4px; font: italic 12px Roboto, sans-serif; }
.filter input::placeholder { color: #777; }
.row { display: flex; align-items: center; height: 23px; gap: 4px; padding-left: 5px; color: #222; }
.group { padding-left: 2px; }
.children { margin-left: 9px; border-left: 1px solid #bbb; position: relative; }
.children .row { padding-left: 11px; }
.children.geometry .row { padding-left: 13px; }
.children::after { content: ""; position: absolute; left: -5px; bottom: 0; width: 9px; border-bottom: 1px solid #bbb; }
.muted { color: #888; }
.muted svg { opacity: .6; }
.selected { background: #abd8f0; color: #c42a1c; font-weight: 700; }
.rollback { height: 5px; margin: 8px 5px 0 4px; background: #b5b5b5; }

/* graphics area */
.viewport { flex: 1; position: relative; display: flex; align-items: center; justify-content: center; padding-bottom: 32px; min-width: 0; }
.plane-label text { font: bold 13px Roboto, sans-serif; fill: #3a59b4; }
.plane-label .faint { font-weight: 400; fill: #6e88c4; }
.tab { position: absolute; top: 289px; width: 29px; height: 30px; display: flex; align-items: center; justify-content: center; background: #fff; border: 1px solid #bbb; }
.tab.left { left: -1px; border-left-color: #fff; }
.tab.right { right: 0; border-right: 0; }
.view-cube { position: absolute; top: 4px; right: 0; }
.face-label text { font: bold 24px Roboto, sans-serif; fill: #333; }
.axis text { font: bold 30px Roboto, sans-serif; }
.axis .y { font-size: 22px; font-weight: 400; }
.display-mode { position: absolute; top: 130px; right: 17px; display: flex; align-items: center; gap: 5px; }
.pointer { position: absolute; top: 107px; left: 75px; }

/* plane dialog */
.dialog { position: absolute; top: 27px; left: 26px; width: 196px; background: #fff; box-shadow: 0 2px 8px rgba(0, 0, 0, .4); }
.dialog-head { display: flex; height: 27px; border-bottom: 1px solid #ddd; }
.dialog-head h2 { flex: 1; padding-left: 5px; font: 700 12px/27px Roboto, sans-serif; color: #c42a1c; }
.dialog-head button { width: 25px; display: flex; align-items: center; justify-content: center; }
.dialog .accept { background: #cde8cb; }
.entities { display: block; width: calc(100% - 5px); height: 23px; margin: 4px 3px 0 2px; padding: 0 5px; border: 1px solid #2f5ea8; border-radius: 2px; background: #d5eef8; font: 11px Roboto, sans-serif; }
.entities::placeholder { color: #667780; }
.type { display: flex; align-items: center; height: 27px; margin-right: 23px; border-bottom: 1px solid #ddd; padding: 3px 5px 0; }
.type select { flex: 1; appearance: none; border: 0; padding: 0; background: none; font: 12px Roboto, sans-serif; color: #222; }
.distance { display: flex; align-items: center; height: 22px; padding-left: 4px; }
.distance label { flex: none; width: 75px; padding-top: 2px; font-size: 11px; white-space: nowrap; }
.distance input { flex: 1; min-width: 0; height: 22px; border: 0; border-bottom: 1px solid #ccc; padding: 3px 3px 0; text-align: right; font: 12px Roboto, sans-serif; color: #222; }
.distance button { width: 24px; display: flex; justify-content: center; }
.slide { display: flex; align-items: center; justify-content: space-between; height: 22px; padding: 4px 3px 0 6px; }
.slide input { appearance: none; width: 100px; height: 12px; margin: 0; background: linear-gradient(#666, #666) center / 100% 1px no-repeat; }
.slide input::-webkit-slider-thumb { appearance: none; width: 11px; height: 11px; border: 1px solid #555; border-radius: 6px; background: #fff; }
```
